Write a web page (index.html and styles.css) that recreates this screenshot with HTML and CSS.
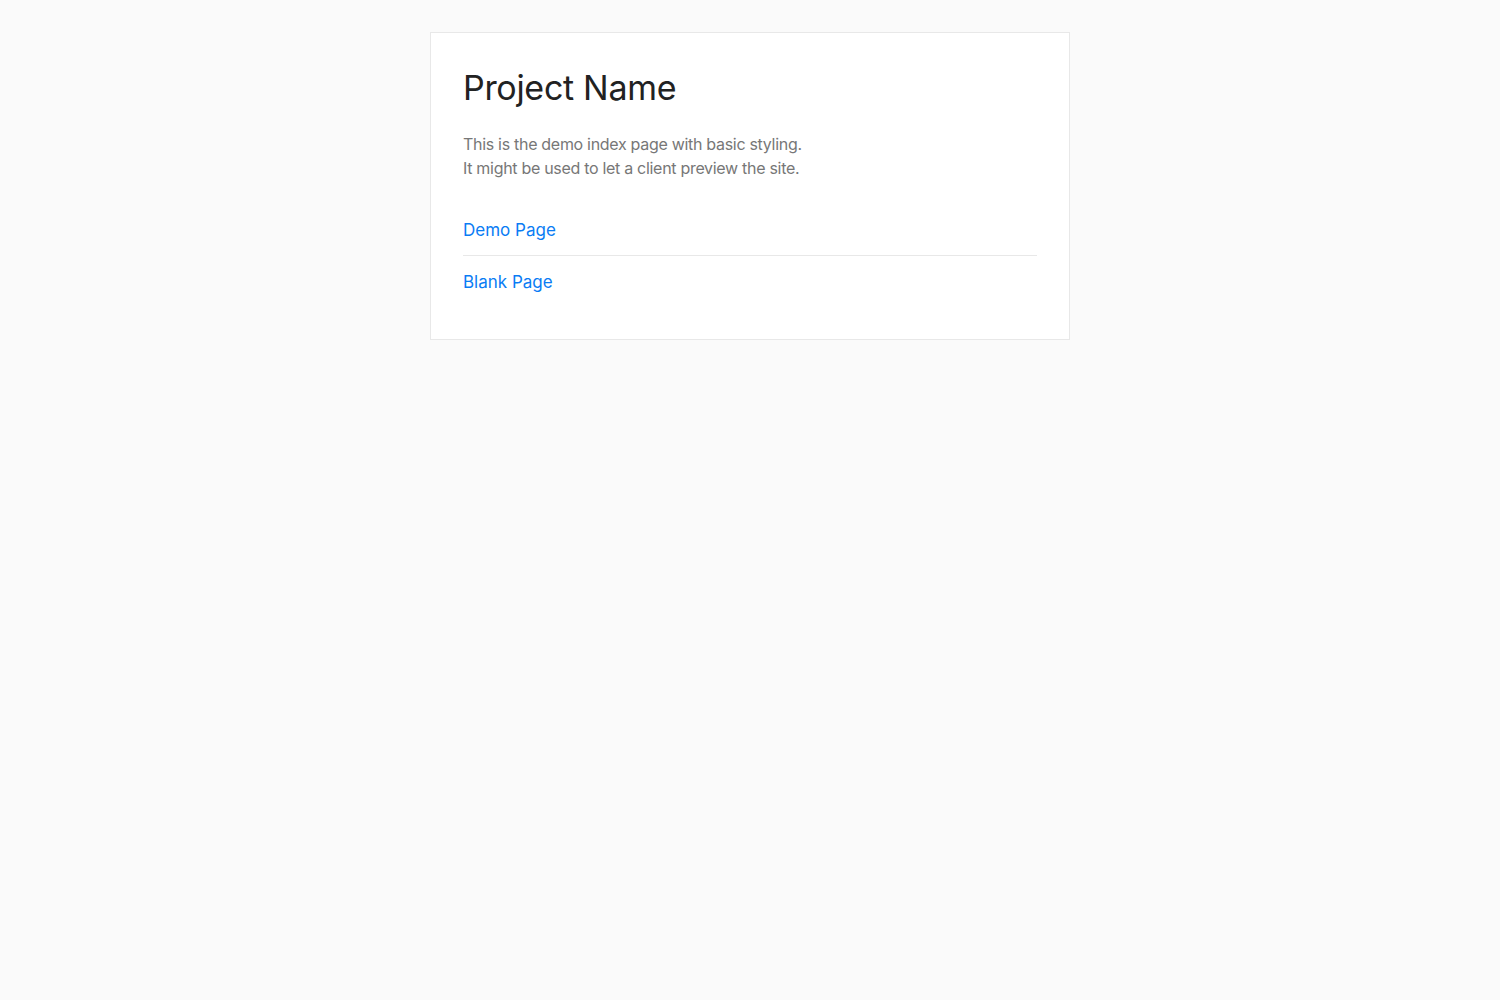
FILE: index.html
```html
<!DOCTYPE html>
<html lang="en">
<head>
<meta charset="utf-8">
<title>Project Name</title>
<link rel="stylesheet" href="styles.css">
</head>
<body>
<main class="card">
  <h1 class="title">Project Name</h1>
  <p class="intro">This is the demo index page with basic styling.<br>It might be used to let a client preview the site.</p>
  <ul class="links">
    <li class="links__item"><a class="links__link" href="#">Demo Page</a></li>
    <li class="links__item"><a class="links__link" href="#">Blank Page</a></li>
  </ul>
</main>
</body>
</html>
```

FILE: styles.css
```css
html, body {
  margin: 0;
  padding: 0;
}
body {
  background: #fafafa;
  font-family: Inter, "Noto Sans", sans-serif;
  color: #222;
  padding-top: 32px;
}
.card {
  box-sizing: border-box;
  width: 640px;
  margin: 0 auto;
  background: #fff;
  border: 1px solid #e8e8e8;
  padding: 32px;
}
.title {
  margin: 0 0 23px;
  font-size: 34px;
  font-weight: 400;
  line-height: 45px;
  color: #222;
  letter-spacing: -0.3px;
}
.intro {
  margin: -1px 0 24px;
  font-size: 16px;
  line-height: 24px;
  color: #777;
  letter-spacing: -0.3px;
}
.links {
  list-style: none;
  margin: 0;
  padding: 0;
}
.links__item {
  padding: 13px 0 11px;
  font-size: 17px;
  line-height: 27px;
}
.links__item + .links__item {
  border-top: 1px solid #e8e8e8;
}
.links__link {
  color: #0a7cf4;
  text-decoration: none;
}
```
